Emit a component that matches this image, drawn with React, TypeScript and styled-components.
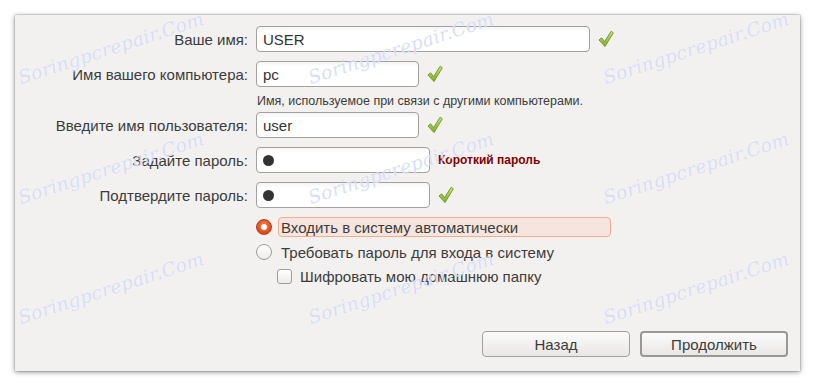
import React from "react";
import styled, { createGlobalStyle } from "styled-components";

const GlobalStyle = createGlobalStyle`
  html, body { margin: 0; padding: 0; background: #ffffff; }
  body { font-family: "Liberation Sans", "DejaVu Sans", sans-serif; color: #3c3c3c; }
`;

const Page = styled.div`
  position: relative;
  width: 816px;
  height: 387px;
  padding: 15px 16px 16px 15px;
  box-sizing: border-box;
  overflow: hidden;
`;

const Window = styled.div`
  width: 785px;
  height: 356px;
  background: #f2f1f0;
  box-shadow: 0 1px 5px rgba(0, 0, 0, 0.45), 0 0 1px rgba(0, 0, 0, 0.5);
  display: flex;
  flex-direction: column;
  padding: 11px 12px 14px 0;
  box-sizing: border-box;
`;

const Row = styled.div<{ $mt?: number }>`
  display: grid;
  grid-template-columns: 233px 1fr;
  column-gap: 8px;
  align-items: center;
  margin-top: ${(p) => p.$mt ?? 0}px;
`;

const Label = styled.div`
  text-align: right;
  font-size: 15px;
  color: #3c3c3c;
  white-space: nowrap;
`;

const Cell = styled.div`
  display: flex;
  align-items: center;
  gap: 8px;
`;

const Field = styled.div<{ $w: number }>`
  width: ${(p) => p.$w}px;
  height: 26px;
  box-sizing: border-box;
  border: 1px solid #a3a19d;
  border-radius: 4px;
  background: linear-gradient(#f4f4f4 0px, #ffffff 5px, #ffffff 100%);
  display: flex;
  align-items: center;
  padding-left: 6px;
  font-size: 15px;
  color: #333333;
`;

const Dot = styled.span`
  width: 11px;
  height: 11px;
  border-radius: 50%;
  background: #333333;
`;

const Hint = styled.div`
  font-size: 12.5px;
  color: #3c3c3c;
  padding: 7px 0 3px 1px;
  line-height: 15px;
  white-space: nowrap;
`;

const Warning = styled.span`
  font-size: 12px;
  font-weight: bold;
  color: #800000;
`;

const Options = styled.div`
  margin-left: 241px;
  display: flex;
  flex-direction: column;
`;

const OptionRow = styled.div<{ $mt: number; $indent?: number }>`
  display: flex;
  align-items: center;
  height: 20px;
  margin-top: ${(p) => p.$mt}px;
  margin-left: ${(p) => p.$indent ?? 0}px;
`;

const Radio = styled.span<{ $on?: boolean }>`
  width: 16px;
  height: 16px;
  box-sizing: border-box;
  border-radius: 50%;
  flex: none;
  display: flex;
  align-items: center;
  justify-content: center;
  border: 1px solid ${(p) => (p.$on ? "#b23f13" : "#a09d97")};
  background: ${(p) =>
    p.$on
      ? "radial-gradient(circle at 50% 40%, #f08a5d, #dd4814 70%)"
      : "linear-gradient(#ffffff, #ecebe9)"};
  &::after {
    content: "";
    display: ${(p) => (p.$on ? "block" : "none")};
    width: 6px;
    height: 6px;
    border-radius: 50%;
    background: #ffffff;
  }
`;

const Checkbox = styled.span`
  width: 15px;
  height: 15px;
  box-sizing: border-box;
  border: 1px solid #a09d97;
  border-radius: 3px;
  background: linear-gradient(#ffffff, #ecebe9);
  flex: none;
`;

const OptionLabel = styled.span<{ $focus?: boolean; $gap: number }>`
  margin-left: ${(p) => p.$gap}px;
  font-size: 15px;
  color: #3c3c3c;
  height: 20px;
  line-height: 19px;
  box-sizing: border-box;
  padding: 0 2px;
  border-radius: 4px;
  border: 1px solid ${(p) => (p.$focus ? "#f2ae8e" : "transparent")};
  background: ${(p) => (p.$focus ? "#f5e5de" : "transparent")};
  width: ${(p) => (p.$focus ? "333px" : "auto")};
  white-space: nowrap;
`;

const Buttons = styled.div`
  margin-top: auto;
  display: flex;
  justify-content: flex-end;
  gap: 10px;
`;

const Button = styled.div<{ $default?: boolean }>`
  width: 148px;
  height: 26px;
  box-sizing: border-box;
  border-radius: 4px;
  border: ${(p) => (p.$default ? "2px solid #9a9894" : "1px solid #a3a19d")};
  background: linear-gradient(#fbfbfb, #e8e7e5);
  display: flex;
  align-items: center;
  justify-content: center;
  font-size: 15px;
  color: #3c3c3c;
`;

const WatermarkLayer = styled.div`
  position: absolute;
  inset: 0;
  pointer-events: none;
`;

const Watermark = styled.span<{ $x: number; $y: number }>`
  position: absolute;
  left: ${(p) => p.$x}px;
  top: ${(p) => p.$y - 21}px;
  transform-origin: 0% 100%;
  transform: rotate(-18deg);
  font-family: "DejaVu Serif", serif;
  font-style: italic;
  font-size: 18.5px;
  letter-spacing: 0.3px;
  color: rgba(190, 200, 242, 0.6);
  text-shadow: 0 0 1px rgba(255, 255, 255, 0.9);
  white-space: nowrap;
`;

const Check = () => (
  <svg width="16" height="18" viewBox="0 0 16 18">
    <defs>
      <linearGradient id="chk" x1="0" y1="0" x2="0" y2="1">
        <stop offset="0" stopColor="#cde37a" />
        <stop offset="1" stopColor="#7eab2a" />
      </linearGradient>
    </defs>
    <path
      d="M1 10 L3.6 7.8 L6.6 11.6 L13.2 1.2 L15.3 2.8 L7 16.6 Z"
      fill="url(#chk)"
      stroke="#6a9420"
      strokeWidth="0.9"
      strokeLinejoin="round"
    />
  </svg>
);

const marks: Array<[number, number]> = [];
[22, 312, 607].forEach((x) => [88, 208, 328].forEach((y) => marks.push([x, y])));

export default function App() {
  return (
    <>
      <GlobalStyle />
      <Page>
        <Window>
          <Row>
            <Label>Ваше имя:</Label>
            <Cell>
              <Field $w={334}>USER</Field>
              <Check />
            </Cell>
          </Row>
          <Row $mt={9}>
            <Label>Имя вашего компьютера:</Label>
            <Cell>
              <Field $w={163}>pc</Field>
              <Check />
            </Cell>
          </Row>
          <Row>
            <span />
            <Hint>Имя, используемое при связи с другими компьютерами.</Hint>
          </Row>
          <Row>
            <Label>Введите имя пользователя:</Label>
            <Cell>
              <Field $w={163}>user</Field>
              <Check />
            </Cell>
          </Row>
          <Row $mt={9}>
            <Label>Задайте пароль:</Label>
            <Cell>
              <Field $w={174}>
                <Dot />
              </Field>
              <Warning>Короткий пароль</Warning>
            </Cell>
          </Row>
          <Row $mt={9}>
            <Label>Подтвердите пароль:</Label>
            <Cell>
              <Field $w={174}>
                <Dot />
              </Field>
              <Check />
            </Cell>
          </Row>
          <Options>
            <OptionRow $mt={9}>
              <Radio $on />
              <OptionLabel $focus $gap={6}>Входить в систему автоматически</OptionLabel>
            </OptionRow>
            <OptionRow $mt={5}>
              <Radio />
              <OptionLabel $gap={6}>Требовать пароль для входа в систему</OptionLabel>
            </OptionRow>
            <OptionRow $mt={4} $indent={21}>
              <Checkbox />
              <OptionLabel $gap={5}>Шифровать мою домашнюю папку</OptionLabel>
            </OptionRow>
          </Options>
          <Buttons>
            <Button>Назад</Button>
            <Button $default>Продолжить</Button>
          </Buttons>
        </Window>
        <WatermarkLayer>
          {marks.map(([x, y]) => (
            <Watermark key={`${x}-${y}`} $x={x} $y={y}>
              Soringpcrepair.Com
            </Watermark>
          ))}
        </WatermarkLayer>
      </Page>
    </>
  );
}
